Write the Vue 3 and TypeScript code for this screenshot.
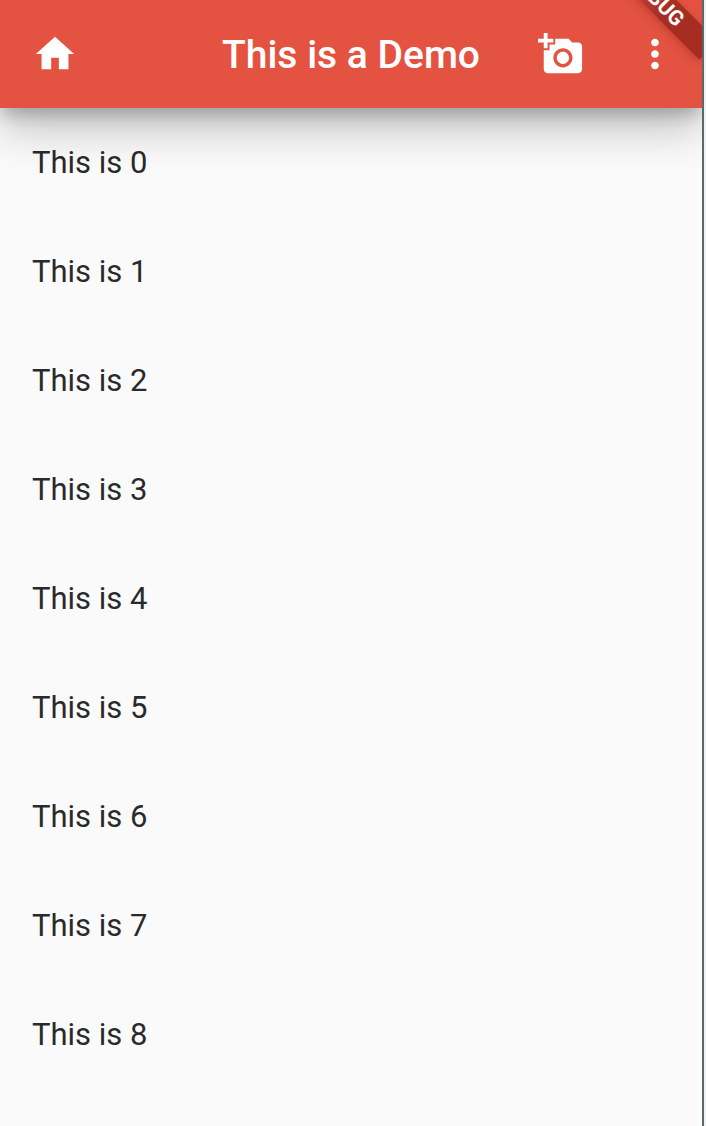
<template>
  <div class="window">
    <div class="screen">
      <header class="app-bar">
        <button class="icon-btn home-btn" aria-label="Home">
          <svg viewBox="0 0 24 24" class="icon"><path d="M10 20v-6h4v6h5v-8h3L12 3 2 12h3v8z" /></svg>
        </button>
        <h1 class="title">This is a Demo</h1>
        <button class="icon-btn camera-btn" aria-label="Add photo">
          <svg viewBox="0 0 24 24" class="icon"><path d="M3 4V1h2v3h3v2H5v3H3V6H0V4h3zm3 6V7h3V4h7l1.83 2H21c1.1 0 2 .9 2 2v12c0 1.1-.9 2-2 2H5c-1.1 0-2-.9-2-2V10h3zm7 9c2.76 0 5-2.24 5-5s-2.24-5-5-5-5 2.24-5 5 2.24 5 5 5zm-3.2-5c0 1.77 1.43 3.2 3.2 3.2s3.2-1.43 3.2-3.2-1.43-3.2-3.2-3.2-3.2 1.43-3.2 3.2z" /></svg>
        </button>
        <button class="icon-btn more-btn" aria-label="More">
          <svg viewBox="0 0 24 24" class="icon"><path d="M12 8c1.1 0 2-.9 2-2s-.9-2-2-2-2 .9-2 2 .9 2 2 2zm0 2c-1.1 0-2 .9-2 2s.9 2 2 2 2-.9 2-2-.9-2-2-2zm0 6c-1.1 0-2 .9-2 2s.9 2 2 2 2-.9 2-2-.9-2-2-2z" /></svg>
        </button>
      </header>

      <ul class="list">
        <li v-for="i in items" :key="i" class="row">This is {{ i }}</li>
      </ul>

      <!-- debug ribbon in the corner -->
      <div class="ribbon"><span>DEBUG</span></div>
    </div>
  </div>
</template>

<script setup lang="ts">
const items: number[] = [0, 1, 2, 3, 4, 5, 6, 7, 8]
</script>

<style>
html,
body {
  margin: 0;
  background: #eef2f3;
}
</style>

<style scoped>
.window {
  display: flex;
  width: 706px;
  height: 1126px;
  overflow: hidden;
  font-family: Roboto, "Liberation Sans", sans-serif;
}

.screen {
  position: relative;
  flex: none;
  width: 702px;
  height: 1126px;
  overflow: hidden;
  background: #fafafa;
  border-right: 2px solid #5c686c;
}

.app-bar {
  position: relative;
  z-index: 1;
  display: flex;
  align-items: center;
  height: 108px;
  background: #e45342;
  box-shadow: 0 8px 16px -2px rgba(0, 0, 0, 0.24), 0 24px 40px rgba(0, 0, 0, 0.2);
}

.icon-btn {
  display: flex;
  flex: none;
  padding: 0;
  border: none;
  background: none;
}

.icon {
  width: 46px;
  height: 46px;
  fill: #fff;
}

.home-btn {
  margin-left: 32px;
}

.title {
  flex: 1;
  margin: 0;
  padding: 2px 0 0 86px;
  font-size: 39px;
  font-weight: 500;
  line-height: 108px;
  text-align: center;
  white-space: nowrap;
  color: #fff;
}

.camera-btn {
  margin-right: 48px;
}

.more-btn {
  margin-right: 24px;
}

.list {
  margin: 0;
  padding: 0;
  list-style: none;
}

.row {
  height: 109px;
  padding-left: 32px;
  font-size: 31px;
  line-height: 109px;
  color: #2a2a2a;
}

.ribbon {
  position: absolute;
  top: -19px;
  right: -30px;
  z-index: 2;
  box-sizing: border-box;
  width: 160px;
  height: 26px;
  padding-left: 14px;
  background: linear-gradient(90deg, #d4493b 30%, #a62d22 65%);
  box-shadow: 0 2px 10px rgba(120, 20, 10, 0.35);
  transform: rotate(45deg);
  text-align: center;
}

.ribbon span {
  font-size: 21px;
  font-weight: 700;
  line-height: 26px;
  color: #fff;
}
</style>
